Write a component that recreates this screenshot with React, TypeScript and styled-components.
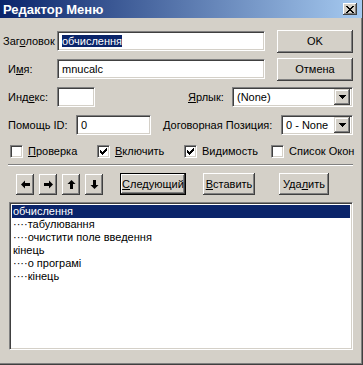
import React from 'react'
import styled, { createGlobalStyle } from 'styled-components'

const face = '#d4d0c8'
const navy = '#0a246a'

const GlobalStyle = createGlobalStyle`
  html, body { margin: 0; padding: 0; background: ${face}; }
  * { box-sizing: border-box; }
`

const Window = styled.div`
  width: 363px;
  height: 365px;
  background: ${face};
  border-right: 1px solid #404040;
  border-bottom: 1px solid #404040;
  box-shadow: inset -1px -1px 0 #808080;
  font-family: 'Liberation Sans', Arial, sans-serif;
  font-size: 11px;
  color: #000;
  display: flex;
  flex-direction: column;
  overflow: hidden;
`

const TitleBar = styled.div`
  height: 18px;
  flex: none;
  display: flex;
  align-items: center;
  justify-content: space-between;
  padding: 0 5px 0 3px;
  background: linear-gradient(to right, ${navy}, #a6caf0);
  color: #fff;
  font-weight: bold;
  font-size: 13px;
`

const CloseButton = styled.div`
  width: 14px;
  height: 12px;
  background: ${face};
  box-shadow: inset -1px -1px 0 #404040, inset 1px 1px 0 #fff, inset -2px -2px 0 #808080;
  display: flex;
  align-items: center;
  justify-content: center;
`

const Body = styled.div`
  padding-top: 9px;
  display: flex;
  flex-direction: column;
`

const Row = styled.div`
  height: 28px;
  display: flex;
  align-items: center;
  padding-right: 9px;
`

const Label = styled.span<{ $indent?: number; $w: number }>`
  width: ${p => p.$w}px;
  padding-left: ${p => p.$indent ?? 0}px;
  white-space: nowrap;
  flex: none;
`

const RightGroup = styled.div`
  margin-left: auto;
  display: flex;
  align-items: center;
`

const Sunken = styled.div`
  background: #fff;
  border-top: 1px solid #808080;
  border-left: 1px solid #808080;
  border-bottom: 1px solid #fff;
  border-right: 1px solid #fff;
  box-shadow: inset 1px 1px 0 #404040, inset -1px -1px 0 ${face};
`

const TextBox = styled(Sunken)<{ $w: number }>`
  width: ${p => p.$w}px;
  height: 20px;
  padding-left: 4px;
  display: flex;
  align-items: center;
  flex: none;
`

const Selected = styled.span`
  background: ${navy};
  color: #fff;
`

const Combo = styled(Sunken)<{ $w: number }>`
  width: ${p => p.$w}px;
  height: 20px;
  padding: 2px 2px 2px 4px;
  display: flex;
  align-items: center;
  justify-content: space-between;
  flex: none;
`

const DropButton = styled.div`
  width: 16px;
  height: 16px;
  background: ${face};
  box-shadow: inset -1px -1px 0 #404040, inset 1px 1px 0 ${face}, inset -2px -2px 0 #808080, inset 2px 2px 0 #fff;
  display: flex;
  align-items: center;
  justify-content: center;
`

const Button = styled.div<{ $w: number; $default?: boolean }>`
  width: ${p => p.$w}px;
  height: ${p => (p.$default ? 22 : 23)}px;
  flex: none;
  display: flex;
  align-items: center;
  justify-content: center;
  white-space: nowrap;
  background: ${face};
  border: ${p => (p.$default ? '1px solid #000' : 'none')};
  box-shadow: inset -1px -1px 0 #404040, inset 1px 1px 0 #fff, inset -2px -2px 0 #808080;
`

const CheckRow = styled.div`
  height: 24px;
  display: grid;
  grid-template-columns: repeat(4, 87px);
  align-items: center;
  padding-left: 10px;
`

const CheckItem = styled.label`
  display: flex;
  align-items: center;
  gap: 5px;
  white-space: nowrap;
`

const CheckBox = styled(Sunken)`
  width: 13px;
  height: 13px;
  display: flex;
  align-items: center;
  justify-content: center;
  flex: none;
`

const Separator = styled.div`
  margin: 1px 9px 0 8px;
  border-top: 1px solid #808080;
  border-bottom: 1px solid #fff;
`

const ToolRow = styled.div`
  margin-top: 7px;
  height: 22px;
  display: flex;
  align-items: center;
  padding-left: 16px;
`

const ArrowButtons = styled.div`
  display: flex;
  gap: 5px;
  margin-right: 17px;
`

const ArrowButton = styled(Button)`
  height: 21px;
`

const ActionButton = styled(Button)<{ $gap?: number }>`
  margin-right: ${p => p.$gap ?? 0}px;
  height: 22px;
`

const ListBox = styled(Sunken)`
  margin: 7px 9px 0 9px;
  height: 148px;
  padding: 2px;
`

const ListItem = styled.div<{ $active?: boolean }>`
  height: 13px;
  line-height: 13px;
  padding-left: 1px;
  white-space: nowrap;
  background: ${p => (p.$active ? navy : 'transparent')};
  color: ${p => (p.$active ? '#fff' : '#000')};
`

const Arrow = ({ dir }: { dir: 'left' | 'right' | 'up' | 'down' }) => {
  const rot = { left: 0, right: 180, up: 90, down: 270 }[dir]
  return (
    <svg width="9" height="9" viewBox="0 0 9 9" style={{ transform: `rotate(${rot}deg)` }}>
      <polygon points="0,4.5 4,0.5 4,3 9,3 9,6 4,6 4,8.5" fill="#000" />
    </svg>
  )
}

const Tick = () => (
  <svg width="7" height="7" viewBox="0 0 7 7" shapeRendering="crispEdges">
    <path d="M0 2h1v1h1v1h1v-1h1v-1h1v-1h1v-1h1v3h-1v1h-1v1h-1v1h-1v1h-1v-1h-1v-1h-1z" fill="#000" />
  </svg>
)

const Caret = () => (
  <svg width="7" height="4" viewBox="0 0 7 4" shapeRendering="crispEdges">
    <path d="M0 0h7v1h-1v1h-1v1h-1v1h-1v-1h-1v-1h-1v-1h-1z" fill="#000" />
  </svg>
)

const CloseX = () => (
  <svg width="8" height="7" viewBox="0 0 8 7" shapeRendering="crispEdges">
    <path d="M0 0h2l2 2.5 2-2.5h2l-3 3.5 3 3.5h-2l-2-2.5-2 2.5h-2l3-3.5z" fill="#000" />
  </svg>
)

const items = [
  'обчислення',
  '····табулювання',
  '····очистити поле введення',
  'кінець',
  '····о програмі',
  '····кінець',
]

export default function App() {
  return (
    <>
      <GlobalStyle />
      <Window>
        <TitleBar>
          <span>Редактор Меню</span>
          <CloseButton>
            <CloseX />
          </CloseButton>
        </TitleBar>
        <Body>
          <Row>
            <Label $w={57} $indent={3}>
              Заг<u>о</u>ловок
            </Label>
            <TextBox $w={208}>
              <Selected>обчислення</Selected>
            </TextBox>
            <RightGroup>
              <Button $w={76}>OK</Button>
            </RightGroup>
          </Row>
          <Row>
            <Label $w={57} $indent={8}>
              И<u>м</u>я:
            </Label>
            <TextBox $w={208}>mnucalc</TextBox>
            <RightGroup>
              <Button $w={76}>Отмена</Button>
            </RightGroup>
          </Row>
          <Row>
            <Label $w={57} $indent={8}>
              Инд<u>е</u>кс:
            </Label>
            <TextBox $w={38} />
            <RightGroup>
              <Label $w={44}>
                <u>Я</u>рлык:
              </Label>
              <Combo $w={121}>
                <span>(None)</span>
                <DropButton>
                  <Caret />
                </DropButton>
              </Combo>
            </RightGroup>
          </Row>
          <Row>
            <Label $w={76} $indent={8}>
              Помощь ID:
            </Label>
            <TextBox $w={75}>0</TextBox>
            <RightGroup>
              <Label $w={118}>Договорная Позиция:</Label>
              <Combo $w={72}>
                <span>0 - None</span>
                <DropButton>
                  <Caret />
                </DropButton>
              </Combo>
            </RightGroup>
          </Row>
          <CheckRow>
            <CheckItem>
              <CheckBox />
              <span>
                <u>П</u>роверка
              </span>
            </CheckItem>
            <CheckItem>
              <CheckBox>
                <Tick />
              </CheckBox>
              <span>
                <u>В</u>ключить
              </span>
            </CheckItem>
            <CheckItem>
              <CheckBox>
                <Tick />
              </CheckBox>
              <span>Видимость</span>
            </CheckItem>
            <CheckItem>
              <CheckBox />
              <span>Список Окон</span>
            </CheckItem>
          </CheckRow>
          <Separator />
          <ToolRow>
            <ArrowButtons>
              <ArrowButton $w={18}>
                <Arrow dir="left" />
              </ArrowButton>
              <ArrowButton $w={18}>
                <Arrow dir="right" />
              </ArrowButton>
              <ArrowButton $w={18}>
                <Arrow dir="up" />
              </ArrowButton>
              <ArrowButton $w={18}>
                <Arrow dir="down" />
              </ArrowButton>
            </ArrowButtons>
            <ActionButton $w={66} $default $gap={17}>
              <span>
                <u>С</u>ледующий
              </span>
            </ActionButton>
            <ActionButton $w={52} $gap={24}>
              <span>
                <u>В</u>ставить
              </span>
            </ActionButton>
            <ActionButton $w={50}>
              <span>
                Уда<u>л</u>ить
              </span>
            </ActionButton>
          </ToolRow>
          <ListBox>
            {items.map((t, i) => (
              <ListItem key={i} $active={i === 0}>
                {t}
              </ListItem>
            ))}
          </ListBox>
        </Body>
      </Window>
    </>
  )
}
